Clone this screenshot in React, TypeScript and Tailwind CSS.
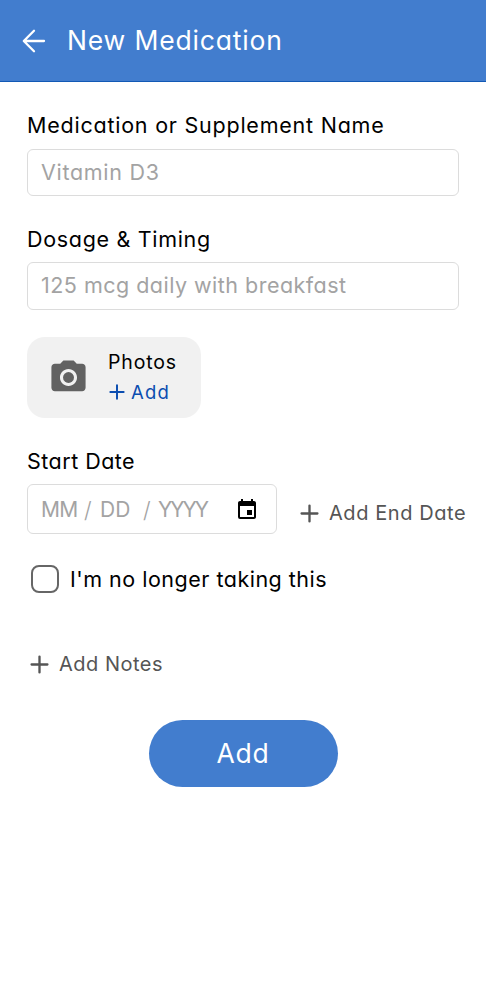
import { useState } from "react";
import { MdEvent, MdPhotoCamera } from "react-icons/md";

function PlusIcon({ className }: { className: string }) {
  return (
    <svg viewBox="0 0 18 18" fill="none" stroke="currentColor" strokeWidth="2.2" strokeLinecap="round" className={className}>
      <path d="M9 1.5v15M1.5 9h15" />
    </svg>
  );
}

function ArrowLeftIcon() {
  return (
    <svg viewBox="0 0 24 24" fill="none" stroke="currentColor" strokeWidth="2.3" strokeLinecap="round" strokeLinejoin="round" className="h-6 w-6">
      <path d="M22 12H2M12 1.8L1.8 12 12 22.2" />
    </svg>
  );
}

export default function App() {
  const [stopped, setStopped] = useState(false);

  return (
    <div className="min-h-[1000px] w-full bg-white text-black font-['Inter','Open_Sans',sans-serif] [font-feature-settings:'cv11']">
      <header className="flex h-[82px] items-center border-b border-[#1259b5] bg-[#427dce] pl-[22px] text-white">
        <button type="button" aria-label="Back">
          <ArrowLeftIcon />
        </button>
        <h1 className="ml-[21px] pb-0.5 text-[26.5px] leading-8 tracking-[0.83px]">New Medication</h1>
      </header>

      <main className="flex flex-col px-[27px] pt-[29px]">
        <label htmlFor="name" className="text-[21.5px] leading-7 tracking-[0.77px] whitespace-nowrap">
          Medication or Supplement Name
        </label>
        <input
          id="name"
          placeholder="Vitamin D3"
          className="mt-[10px] h-[47px] w-[432px] rounded-md border border-[#dcdcdc] pb-0.5 pl-[13px] text-[21.5px] tracking-[0.7px] placeholder:text-[#a3a3a3]"
        />

        <label htmlFor="dosage" className="mt-[29px] text-[21.5px] leading-7 tracking-[0.68px]">
          Dosage &amp; Timing
        </label>
        <input
          id="dosage"
          placeholder="125 mcg daily with breakfast"
          className="mt-[9px] h-12 w-[432px] rounded-md border border-[#dcdcdc] pb-0.5 pl-[13px] text-[21.5px] tracking-[0.48px] placeholder:text-[#a3a3a3]"
        />

        <div className="mt-[27px] flex h-[81px] w-[174px] items-center rounded-[18px] bg-[#f1f1f1] pl-[21px]">
          <MdPhotoCamera className="size-[41px] text-[#626262]" />
          <div className="ml-[19px] pb-px">
            <p className="text-[19.5px] leading-[30px] tracking-[0.85px]">Photos</p>
            <button type="button" className="flex items-center gap-1.5 text-[18.5px] leading-[30px] tracking-[1.2px] text-[#0b4db0]">
              <PlusIcon className="ml-px size-4" />
              Add
            </button>
          </div>
        </div>

        <span className="mt-[29px] text-[21.5px] leading-7 tracking-[0.48px]">Start Date</span>
        <div className="mt-[9px] flex items-center">
          <div className="flex h-[50px] w-[250px] shrink-0 items-center rounded-md border border-[#dcdcdc] pt-0.5 pl-[13px] text-[21px] text-[#a3a3a3]">
            <span className="w-[43px] tracking-[-0.6px]">MM</span>
            <span className="w-[16px] text-[22px] font-light">/</span>
            <span className="w-[43px]">DD</span>
            <span className="w-[15px] text-[22px] font-light">/</span>
            <span className="w-[77px] tracking-[-2px]">YYYY</span>
            <MdEvent className="size-6 text-black" />
          </div>
          <button type="button" className="mt-2 ml-[23px] flex items-center gap-[10px] text-xl tracking-[0.57px] whitespace-nowrap text-[#555]">
            <PlusIcon className="size-[19px]" />
            Add End Date
          </button>
        </div>

        <label className="mt-[31px] ml-1 flex items-center text-[21.5px] leading-7 tracking-[0.5px]">
          <input
            type="checkbox"
            checked={stopped}
            onChange={(e) => setStopped(e.target.checked)}
            className="mr-[11px] size-7 appearance-none rounded-lg border-2 border-[#666] checked:bg-[#427dce]"
          />
          I'm no longer taking this
        </label>

        <button type="button" className="mt-[57px] ml-[3px] flex items-center gap-[10px] text-xl tracking-[0.5px] text-[#555]">
          <PlusIcon className="size-[19px]" />
          Add Notes
        </button>

        <button type="button" className="mt-[42px] h-[67px] w-[189px] self-center rounded-full bg-[#427dce] text-[26.5px] tracking-[0.75px] text-white">
          Add
        </button>
      </main>
    </div>
  );
}
